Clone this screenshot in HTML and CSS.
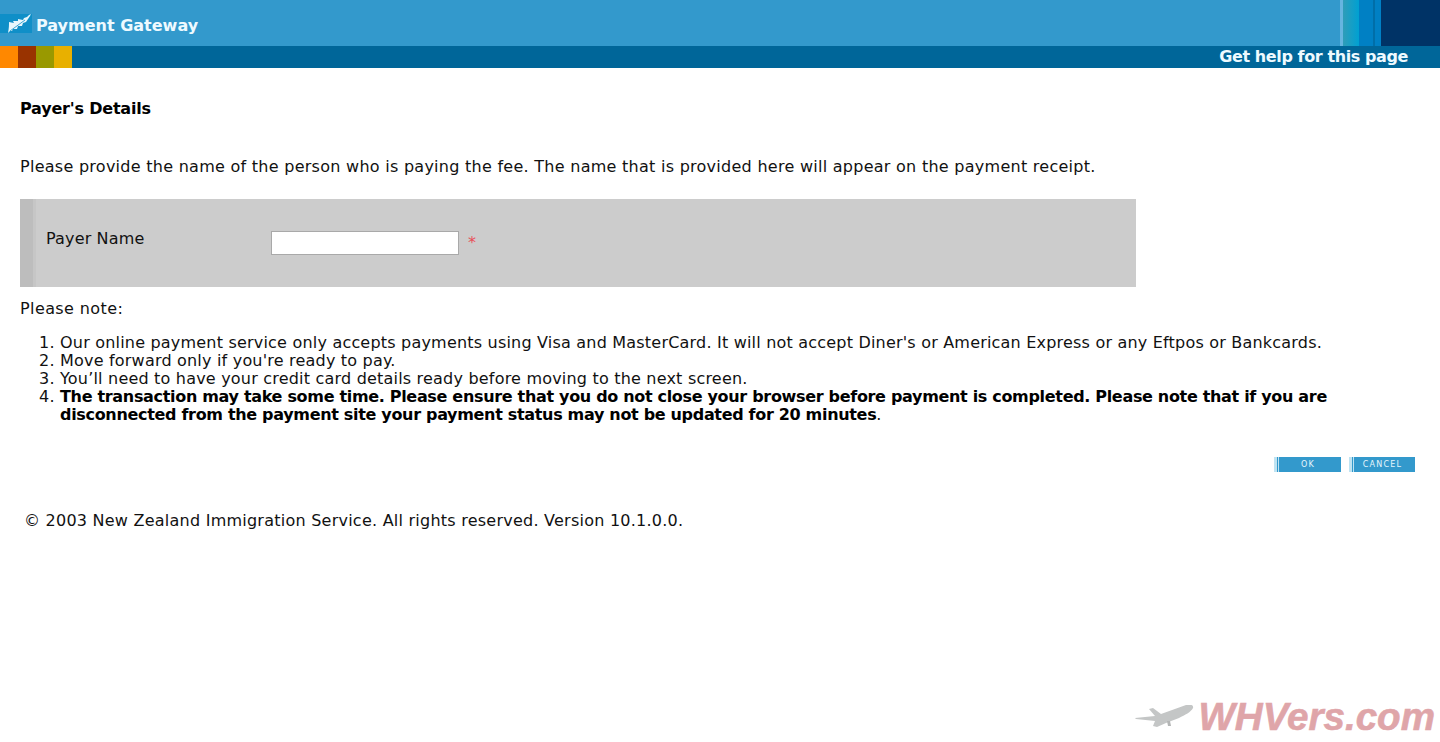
FILE: index.html
```html
<!DOCTYPE html>
<html lang="en">
<head>
	<meta charset="UTF-8">
	<title>Payment Gateway</title>
	<link rel="stylesheet" href="styles.css">
</head>
<body>
	<header class="banner">
		<div class="banner-top">
			<div class="brand">
				<span class="fern">
					<svg width="32" height="19" viewBox="0 0 32 19">
						<path d="M8 19 C9 14 9 11 9 8 L14 9 L13 7 L18 7 L18 5 L23 6 L24 4 L27 3 L29 1 L31 0 L30 2 L28 5 L26 8 L23 9 L22 12 L18 12 L17 15 L13 15 L12 17 L10 17 Z" fill="#e6f6fc"/>
						<path d="M10 17 L25 6" stroke="#0f8fc8" stroke-width="0.8" fill="none"/>
					</svg>
				</span>
				<span class="brand-name">Payment Gateway</span>
			</div>
			<div class="stripes">
				<i class="s1"></i><i class="s2"></i><i class="s3"></i><i class="s4"></i><i class="s5"></i><i class="s6"></i>
			</div>
		</div>
		<div class="banner-bottom">
			<div class="swatches">
				<i class="orange"></i><i class="rust"></i><i class="olive"></i><i class="gold"></i>
			</div>
			<a class="help" href="#">Get help for this page</a>
		</div>
	</header>

	<main class="content">
		<h1>Payer's Details</h1>
		<p class="intro">Please provide the name of the person who is paying the fee. The name that is provided here will appear on the payment receipt.</p>

		<div class="panel">
			<label class="field-label" for="payer">Payer Name</label>
			<input class="field-input" id="payer" type="text">
			<span class="required">*</span>
		</div>

		<p class="note">Please note:</p>
		<ol class="notes">
			<li>Our online payment service only accepts payments using Visa and MasterCard. It will not accept Diner's or American Express or any Eftpos or Bankcards.</li>
			<li>Move forward only if you're ready to pay.</li>
			<li>You’ll need to have your credit card details ready before moving to the next screen.</li>
			<li><b>The transaction may take some time. Please ensure that you do not close your browser before payment is completed. Please note that if you are disconnected from the payment site your payment status may not be updated for 20 minutes</b>.</li>
		</ol>

		<div class="actions">
			<button class="btn" type="button">OK</button>
			<button class="btn" type="button">CANCEL</button>
		</div>

		<p class="copyright">© 2003 New Zealand Immigration Service. All rights reserved. Version 10.1.0.0.</p>
	</main>

	<div class="watermark">
		<svg width="62" height="24" viewBox="0 0 62 24">
			<path d="M0 13 L20 11 L14 4 L18 3 L26 9 L51 0 C55 -1 59 0 58 3 C56 7 50 10 44 13 L31 18 L22 22 L18 21 L20 16 L1 14 Z" fill="#c4c6c6"/>
			<path d="M32 16 L35 16 L36 21 L33 21 Z" fill="#b4b6b6"/>
		</svg>
		<span class="watermark-text">WHVers.com</span>
	</div>
</body>
</html>
```

FILE: styles.css
```css
html, body {
	margin: 0;
	padding: 0;
}
body {
	position: relative;
	height: 742px;
	overflow: hidden;
	background-color: #fff;
	color: #111;
	font-family: "DejaVu Sans", Verdana, sans-serif;
	font-size: 16px;
	line-height: 18px;
	letter-spacing: 0.24px;
}
.banner-top {
	display: flex;
	justify-content: space-between;
	height: 46px;
	background-color: #3399cc;
}
.brand {
	display: flex;
	align-items: center;
}
.fern {
	display: block;
	width: 32px;
	height: 19px;
	background-color: #0f8fc8;
}
.brand-name {
	margin: 5px 0 0 4px;
	color: #eefaff;
	font-size: 16px;
	font-weight: bold;
	letter-spacing: 0;
}
.stripes {
	display: flex;
}
.stripes i {
	display: block;
}
.s1 { width: 3px; background-color: #66b5e0; }
.s2 { width: 16px; background: linear-gradient(90deg, #2f9db8, #00a0d2); }
.s3 { width: 14px; background-color: #0080c4; }
.s4 { width: 2px; background-color: #006ea8; }
.s5 { width: 6px; background-color: #0080c4; }
.s6 { width: 59px; background-color: #003366; }
.banner-bottom {
	display: flex;
	justify-content: space-between;
	align-items: center;
	height: 22px;
	background-color: #006699;
}
.swatches {
	display: flex;
	height: 100%;
}
.swatches i {
	display: block;
	width: 18px;
}
.orange { background-color: #ff8800; }
.rust { background-color: #993300; }
.olive { background-color: #999900; }
.gold { background-color: #e8b000; }
.help {
	margin: 0 32px 0 0;
	color: #eefaff;
	font-size: 16px;
	font-weight: bold;
	letter-spacing: -0.4px;
	text-decoration: none;
}
.content {
	padding: 32px 25px 0 20px;
}
h1 {
	margin: 0;
	font-size: 16px;
	line-height: 18px;
	font-weight: bold;
	letter-spacing: -0.2px;
	color: #000;
}
.intro {
	margin: 40px 0 0;
	letter-spacing: 0.27px;
}
.panel {
	display: flex;
	align-items: flex-start;
	width: 1116px;
	height: 88px;
	margin-top: 23px;
	box-sizing: border-box;
	padding: 31px 0 0 26px;
	background: linear-gradient(90deg, #bdbdbd 13px, #c6c6c6 13px, #c6c6c6 16px, #cccccc 16px);
}
.field-label {
	width: 225px;
	letter-spacing: 0.15px;
}
.field-input {
	width: 188px;
	height: 24px;
	margin: 1px 0 0;
	padding: 0;
	box-sizing: border-box;
	border: 1px solid #a9a9a9;
	background-color: #fff;
}
.required {
	margin: 4px 0 0 9px;
	color: #e8505a;
	font-size: 16px;
}
.note {
	margin: 13px 0 0;
	letter-spacing: 0.4px;
}
.notes {
	margin: 16px 0 0;
	padding: 0 0 0 40px;
	letter-spacing: 0.2px;
}
.notes b {
	color: #000;
	letter-spacing: -0.32px;
}
.actions {
	display: flex;
	justify-content: flex-end;
	gap: 8px;
	margin-top: 33px;
}
.btn {
	width: 67px;
	height: 15px;
	padding: 0 0 0 1px;
	border: none;
	background: linear-gradient(90deg, #bfe3f2 3px, #3399cc 3px, #3399cc 4px, #bfe3f2 4px, #bfe3f2 5px, #3399cc 5px);
	color: #e6f6fc;
	font-family: "DejaVu Sans", Verdana, sans-serif;
	font-size: 8px;
	line-height: 15px;
	letter-spacing: 1.2px;
}
.btn + .btn {
	width: 66px;
}
.copyright {
	margin: 40px 0 0 4px;
}
.watermark {
	position: absolute;
	right: 5px;
	bottom: 3px;
	display: flex;
	align-items: center;
	gap: 1px;
}
.watermark-text {
	color: #dfa5a9;
	font-family: "Liberation Sans", Arial, sans-serif;
	font-size: 38.6px;
	line-height: 44px;
	font-weight: bold;
	font-style: italic;
	letter-spacing: 0;
	-webkit-text-stroke: 0.6px #dfa5a9;
}
```
